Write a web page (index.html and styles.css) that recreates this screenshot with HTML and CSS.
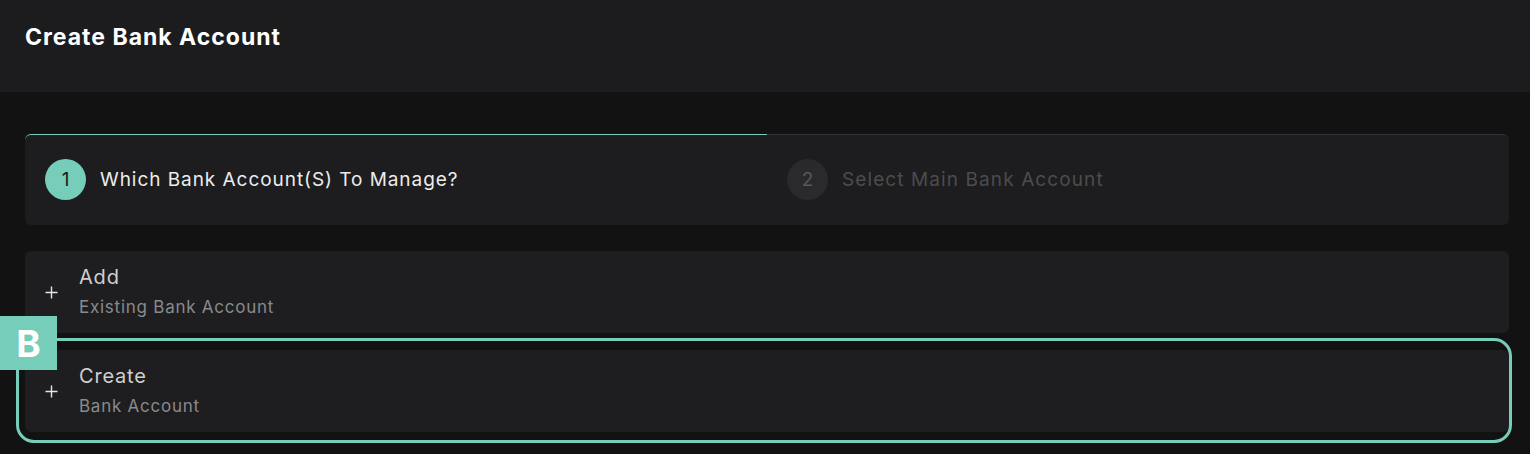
FILE: index.html
```html
<!DOCTYPE html>
<html>
<head>
<meta charset="utf-8">
<link rel="stylesheet" href="styles.css">
</head>
<body>
<header class="topbar">
  <h1 class="title">Create Bank Account</h1>
</header>
<main class="content">
  <div class="steps">
    <div class="step step-active">
      <span class="step-num">1</span>
      <span class="step-label">Which Bank Account(S) To Manage?</span>
    </div>
    <div class="step step-idle">
      <span class="step-num">2</span>
      <span class="step-label">Select Main Bank Account</span>
    </div>
  </div>
  <div class="options">
    <div class="option">
      <svg class="plus" width="13" height="13" viewBox="0 0 13 13"><path d="M6.5 0.5v12M0.5 6.5h12" stroke="#e6e6e6" stroke-width="1.4" fill="none"/></svg>
      <div class="option-text">
        <div class="option-title">Add</div>
        <div class="option-sub">Existing Bank Account</div>
      </div>
    </div>
    <div class="option option-marked">
      <svg class="plus" width="13" height="13" viewBox="0 0 13 13"><path d="M6.5 0.5v12M0.5 6.5h12" stroke="#e6e6e6" stroke-width="1.4" fill="none"/></svg>
      <div class="option-text">
        <div class="option-title">Create</div>
        <div class="option-sub">Bank Account</div>
      </div>
      <span class="highlight"></span>
      <span class="badge">B</span>
    </div>
  </div>
</main>
</body>
</html>
```
FILE: styles.css
```css
* { box-sizing: border-box; }
html, body {
  margin: 0;
  background: #121212;
  font-family: Inter, "Noto Sans", sans-serif;
  color: #e8e8e8;
}
body { width: 1530px; height: 454px; overflow: hidden; }

.topbar {
  height: 92px;
  background: #1c1c1e;
  padding: 23px 25px 0;
}
.title {
  margin: 0;
  font-size: 23px;
  font-weight: 700;
  color: #ffffff;
  line-height: 28px;
  letter-spacing: 1px;
}

.content {
  padding: 42px 21px 0 25px;
}

.steps {
  display: flex;
  height: 91px;
  background: #1d1d1f;
  border-radius: 6px;
  border-top: 1px solid #333335;
}
.step {
  flex: 1;
  display: flex;
  align-items: center;
  padding-left: 20px;
  padding-bottom: 1px;
  gap: 14px;
  font-size: 19px;
  letter-spacing: 0.95px;
}
.step-active {
  border-top: 1px solid #76cdb9;
  margin-top: -1px;
  border-top-left-radius: 6px;
}
.step-num {
  width: 41px;
  height: 41px;
  border-radius: 50%;
  display: flex;
  align-items: center;
  justify-content: center;
  font-size: 19px;
  letter-spacing: 0;
}
.step-active .step-num { background: #76cdb9; color: #1b1b1b; }
.step-active .step-label { color: #ececec; }
.step-idle .step-num { background: #2a2a2c; color: #58585a; }
.step-idle .step-label { color: #4c4c4e; letter-spacing: 1.1px; }

.options {
  display: flex;
  flex-direction: column;
  gap: 17px;
  margin-top: 26px;
}
.option {
  position: relative;
  height: 82px;
  background: #1e1e20;
  border-radius: 6px;
  display: flex;
  align-items: center;
  padding-left: 20px;
}
.plus {
  flex: none;
  margin-right: 21px;
  margin-top: 1px;
}
.option-text { display: flex; flex-direction: column; gap: 7px; margin-top: -1px; }
.option-title { font-size: 20px; color: #cfcfd1; line-height: 24px; letter-spacing: 0.8px; }
.option-sub { font-size: 17px; color: #8a8a8c; line-height: 22px; letter-spacing: 0.75px; }

.highlight {
  position: absolute;
  left: -9px;
  right: -3px;
  top: -12px;
  bottom: -11px;
  border: 3px solid #76cdb9;
  border-radius: 18px;
  pointer-events: none;
}
.badge {
  position: absolute;
  left: -25px;
  top: -34px;
  width: 57px;
  height: 54px;
  background: #76cdb9;
  color: #ffffff;
  font-weight: 700;
  font-size: 37px;
  display: flex;
  align-items: center;
  justify-content: center;
  line-height: 1;
}
```
